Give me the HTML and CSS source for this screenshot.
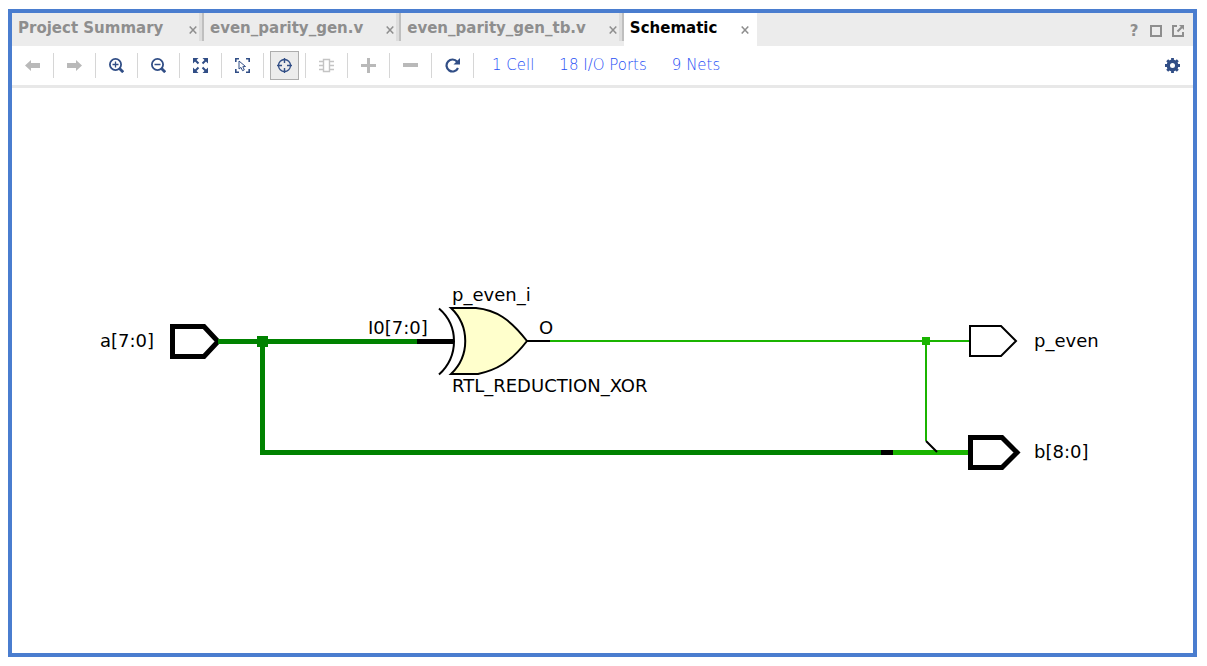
FILE: index.html
```html
<!DOCTYPE html>
<html lang="en">
<head>
<meta charset="utf-8">
<title>Schematic</title>
<link rel="stylesheet" href="styles.css">
</head>
<body>
<main class="window">
  <header class="tabbar">
    <nav class="tabs">
      <div class="tab"><button class="tab-title">Project Summary</button><button class="tab-close" aria-label="Close Project Summary"><svg width="8" height="8" viewBox="0 0 8 8"><path d="M.7.5 7.3 7.5M7.3.5.7 7.5"/></svg></button></div>
      <div class="tab"><button class="tab-title">even_parity_gen.v</button><button class="tab-close" aria-label="Close even_parity_gen.v"><svg width="8" height="8" viewBox="0 0 8 8"><path d="M.7.5 7.3 7.5M7.3.5.7 7.5"/></svg></button></div>
      <div class="tab"><button class="tab-title">even_parity_gen_tb.v</button><button class="tab-close" aria-label="Close even_parity_gen_tb.v"><svg width="8" height="8" viewBox="0 0 8 8"><path d="M.7.5 7.3 7.5M7.3.5.7 7.5"/></svg></button></div>
      <div class="tab active"><button class="tab-title">Schematic</button><button class="tab-close" aria-label="Close Schematic"><svg width="8" height="8" viewBox="0 0 8 8"><path d="M.7.5 7.3 7.5M7.3.5.7 7.5"/></svg></button></div>
    </nav>
    <div class="window-actions">
      <button class="action help" aria-label="Help">?</button>
      <button class="action" aria-label="Maximize"><svg width="12" height="12" viewBox="0 0 12 12"><path d="M1 1h10v10H1z" stroke-width="2"/></svg></button>
      <button class="action" aria-label="Float"><svg width="12" height="12" viewBox="0 0 12 12"><path d="M5 1H1v10h10V7M5.500 6.500 10 2" stroke-width="2"/><path d="M7 0h5v5z" fill="#8e8e8e" stroke="none"/></svg></button>
    </div>
  </header>
  <div class="toolbar">
    <div class="cell"><button class="tool" aria-label="Back"><svg width="15" height="15" viewBox="0 0 15 15"><path class="off" d="M0 7.5 6 2v3h9v5H6v3z"/></svg></button></div>
    <div class="cell"><button class="tool" aria-label="Forward"><svg width="15" height="15" viewBox="0 0 15 15"><path class="off" d="M15 7.5 9 2v3H0v5h9v3z"/></svg></button></div>
    <div class="cell"><button class="tool" aria-label="Zoom in"><svg width="15" height="15" viewBox="0 0 15 15"><g class="line"><circle cx="6.5" cy="6.5" r="5.6" stroke-width="1.8"/><path d="M6.5 3.5v6M3.5 6.5h6" stroke-width="1.3"/><path d="m10.5 10.5 3.7 3.7" stroke-width="2.8"/></g></svg></button></div>
    <div class="cell"><button class="tool" aria-label="Zoom out"><svg width="15" height="15" viewBox="0 0 15 15"><g class="line"><circle cx="6.5" cy="6.5" r="5.6" stroke-width="1.8"/><path d="M3.5 6.5h6" stroke-width="1.5"/><path d="m10.5 10.5 3.7 3.7" stroke-width="2.8"/></g></svg></button></div>
    <div class="cell"><button class="tool" aria-label="Zoom fit"><svg width="15" height="15" viewBox="0 0 15 15"><path class="solid" d="M0 0h5.5L0 5.5zM15 0v5.5L9.5 0zM0 15V9.500L5.500 15zM15 15H9.500L15 9.500z"/><path class="line" d="m1 1 4.500 4.500M14 1 9.500 5.500M1 14l4.500-4.500M14 14 9.500 9.500" stroke-width="2"/></svg></button></div>
    <div class="cell"><button class="tool" aria-label="Select area"><svg width="15" height="15" viewBox="0 0 15 15"><g class="line"><path d="M4 .8H.8V4M11 .8h3.200V4M4 14.200H.8V11M11 14.200h3.200V11" stroke-width="1.600"/><path d="M4 3v8l2-1.600 1.500 3.300 1.800-.8L7.800 8.700l2.700-.2z" stroke-width="1"/></g></svg></button></div>
    <div class="cell"><button class="tool pressed" aria-label="Autofit selection" aria-pressed="true"><svg width="15" height="15" viewBox="0 0 15 15"><g class="line"><circle cx="7.500" cy="7.500" r="6" stroke-width="1.300"/><path d="M7.500 0v5M7.500 10v5M0 7.500h5M10 7.500h5" stroke-width="1.400"/></g></svg></button></div>
    <div class="cell"><button class="tool" aria-label="Expand cell"><svg width="15" height="15" viewBox="0 0 15 15"><path class="offline" d="M4.500 1.500h6v12h-6zM0 3.500h4M11 3.500h4M0 7.500h4M11 7.500h4M0 11.500h4M11 11.500h4"/></svg></button></div>
    <div class="cell"><button class="tool" aria-label="Add"><svg width="15" height="15" viewBox="0 0 15 15"><path class="off" d="M6 0h3v6h6v3H9v6H6V9H0V6h6z"/></svg></button></div>
    <div class="cell"><button class="tool" aria-label="Remove"><svg width="15" height="15" viewBox="0 0 15 15"><path class="off" d="M0 5h15v4H0z"/></svg></button></div>
    <div class="cell"><button class="tool" aria-label="Reload"><svg width="15" height="15" viewBox="0 0 15 15"><path class="line" d="M12.200 3.700A6 6 0 1 0 13 10" stroke-width="2.200"/><path class="solid" d="M15 0v6.500H8.500z"/></svg></button></div>
    <nav class="stats"><a href="#cells">1 Cell</a><a href="#ports">18 I/O Ports</a><a href="#nets">9 Nets</a></nav>
    <button class="tool settings" aria-label="Settings"><svg width="15" height="15" viewBox="0 0 15 15"><circle class="line" cx="7.500" cy="7.500" r="4.200" stroke-width="3.400"/><path class="line" d="M7.500 0v3M7.500 12v3M0 7.500h3M12 7.500h3M2.200 2.200l2 2M10.800 10.800l2 2M12.800 2.200l-2 2M4.200 10.800l-2 2" stroke-width="2.800"/></svg></button>
  </div>
  <section class="canvas">
    <svg class="schematic" viewBox="12 88 1181 565" role="img" aria-label="Even parity generator schematic">
      <g class="bus">
        <path d="M218 341.500H418M262.500 341V452.500H882"/>
        <path class="pin" d="M417 341.500H454M881 452.500H893"/>
        <path class="bright" d="M893 452.500H970"/>
      </g>
      <path class="dark-node" d="M257 336h11v11h-11z"/>
      <path class="net" d="M550 341H970M926 341V441"/>
      <path class="bright-node" d="M922 337h8v8h-8z"/>
      <path class="outline" d="M527 341H550M926 441l11 11"/>
      <path class="gate" d="M451 308H476C496 310 510 319 527 341 510 363 496 370 478 374H451C470 356 470 326 451 308z"/>
      <path class="outline" d="M439 308.500C459 326 459 356 439 374.500"/>
      <path class="bus-port" d="M172.500 326.500H204L218 341.500 204 356.500H172.500z"/>
      <path class="outline" d="M970 326H1001L1016 341 1001 356H970z"/>
      <path class="bus-port" d="M970.500 437.500H1002L1017 452.500 1002 467.500H970.500z"/>
      <path class="wire-end" d="M218 341.500h4"/>
      <g class="labels">
        <text x="100" y="347">a[7:0]</text>
        <text x="368" y="334">I0[7:0]</text>
        <text x="452" y="301">p_even_i</text>
        <text x="539" y="334">O</text>
        <text x="452" y="392">RTL_REDUCTION_XOR</text>
        <text x="1034" y="347">p_even</text>
        <text x="1034" y="458">b[8:0]</text>
      </g>
    </svg>
  </section>
</main>
</body>
</html>
```
FILE: styles.css
```css
* {
  box-sizing: border-box;
}

body {
  margin: 0;
  height: 100vh;
  padding: 9px 10px 9px 8px;
  background: #fff;
  font-family: "DejaVu Sans", sans-serif;
}

button {
  margin: 0;
  padding: 0;
  border: 0;
  background: none;
  font: inherit;
  color: inherit;
}

svg {
  display: block;
  fill: none;
}

.window {
  display: flex;
  flex-direction: column;
  height: 100%;
  border: 4px solid #4a7dcf;
  background: #fff;
}

.tabbar {
  display: flex;
  justify-content: space-between;
  height: 33px;
  background: #ececec;
}

.tabs {
  display: flex;
}

.tab {
  display: flex;
  justify-content: space-between;
  gap: 23px;
  min-width: 192px;
  padding: 0 7px 4px 6px;
  color: #8e8e8e;
  font-size: 15px;
  font-weight: bold;
  background: linear-gradient(90deg, #ddd 3px, #bfbfbf 3px) right top / 5px 28px no-repeat;
}

.tab.active {
  gap: 24px;
  min-width: 0;
  padding-right: 8px;
  background: #fff;
}

.active .tab-title {
  color: #000;
}

.tab-close {
  padding-top: 5px;
  stroke: #8e8e8e;
  stroke-width: 1.5;
}

.window-actions {
  display: flex;
  align-items: center;
  gap: 10px;
  padding: 2px 9px 0 0;
}

.action {
  width: 12px;
  stroke: #8e8e8e;
}

.help {
  color: #8e8e8e;
  font-size: 15px;
  font-weight: bold;
  stroke: none;
}

.toolbar {
  display: flex;
  align-items: center;
  height: 42px;
  border-bottom: 3px solid #e8e8e8;
}

.cell {
  display: flex;
  align-items: center;
  height: 25px;
  padding: 0 6px;
  border-right: 1px solid #d6d6d6;
}

.tool {
  display: grid;
  place-items: center;
  flex: none;
  width: 29px;
  height: 29px;
}

.pressed {
  border: 1px solid #adadad;
  background: #ececec;
}

.solid {
  fill: #314e86;
}

.line {
  stroke: #314e86;
}

.off {
  fill: #b9b9b9;
}

.offline {
  stroke: #c4c4c4;
  stroke-width: 1.4;
}

.stats {
  display: flex;
  gap: 25px;
  padding: 0 0 2px 18px;
  font-size: 15px;
  font-weight: 200;
}

.stats a {
  color: #1f50f5;
  text-decoration: none;
  white-space: nowrap;
}

.settings {
  margin: 0 6px 0 auto;
}

.canvas {
  flex: 1;
  min-height: 0;
}

.schematic {
  width: 100%;
  height: 100%;
}

.bus {
  stroke: #008200;
  stroke-width: 5;
}

.bus .pin {
  stroke: #000;
}

.bus .bright {
  stroke: #1ab400;
}

.dark-node {
  fill: #008200;
}

.bright-node {
  fill: #1ab400;
}

.net {
  stroke: #1ab400;
  stroke-width: 2;
}

.outline {
  stroke: #000;
  stroke-width: 2;
}

.gate {
  fill: #ffc;
  stroke: #000;
  stroke-width: 2;
}

.bus-port {
  stroke: #000;
  stroke-width: 5;
}

.wire-end {
  stroke: #008200;
  stroke-width: 5;
}

.labels {
  fill: #000;
  font-size: 18px;
}
```
